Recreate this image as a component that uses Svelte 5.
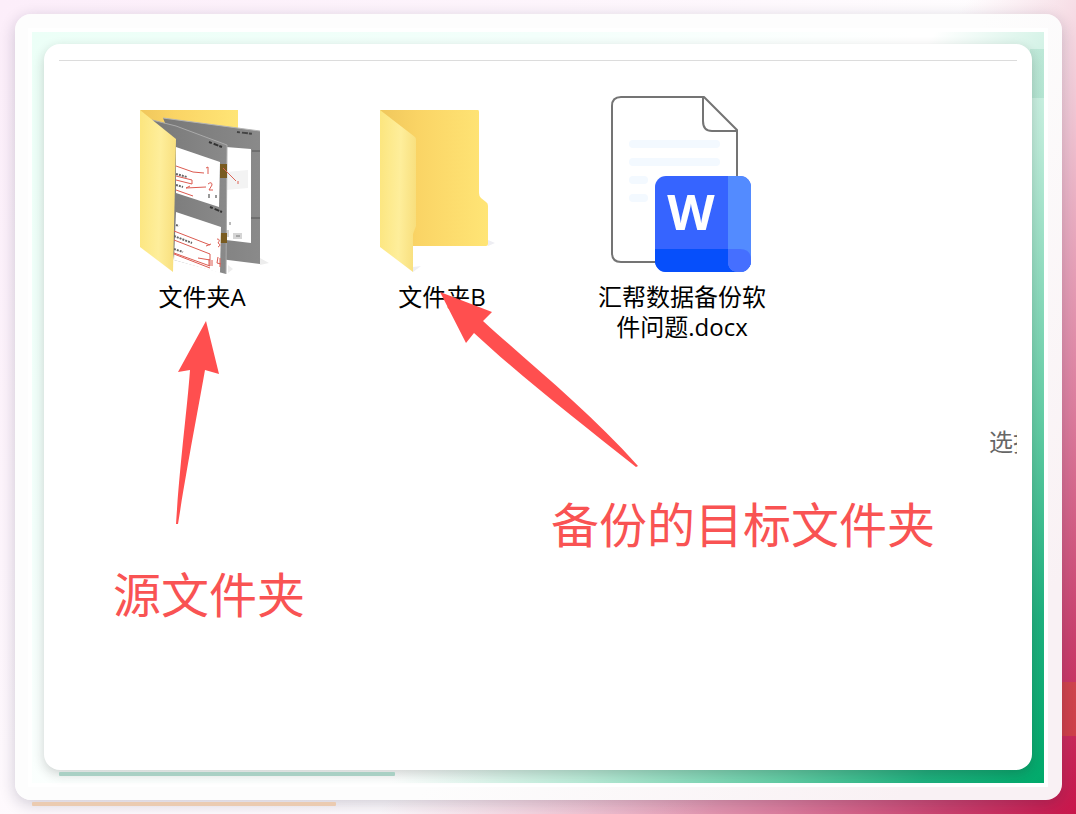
<script lang="ts">
	type FileItem = { name: string; kind: 'pages' | 'empty' | 'docx' };
	type Note = { text: string; x: number; y: number };

	const files: FileItem[] = [
		{ name: '文件夹A', kind: 'pages' },
		{ name: '文件夹B', kind: 'empty' },
		{ name: '汇帮数据备份软件问题.docx', kind: 'docx' }
	];

	// notes and arrows sit freely on the explorer canvas
	const notes: Note[] = [
		{ text: '源文件夹', x: 54, y: 504 },
		{ text: '备份的目标文件夹', x: 492, y: 434 }
	];
	const arrows = [
		'M147 260 L160 313 L146 309 C137 360 129 400 119 463 L117 463 C121 400 128 350 131 309 L119 311 Z',
		'M381 231 L433 251 L424 260 C470 302 530 350 579 405 L577 406 C520 361 460 314 415 272 L407 282 Z'
	];
</script>

{#snippet folder(withPages: boolean)}
	<svg class="icon" width="160" height="180" viewBox="0 0 160 180" aria-hidden="true">
		<defs>
			<linearGradient id="back" x1="0" x2="1">
				<stop offset="0" stop-color="#f0c75c" />
				<stop offset="0.35" stop-color="#fad465" />
				<stop offset="1" stop-color="#ffe576" />
			</linearGradient>
			<linearGradient id="front" x1="0" x2="1" y1="0.4" y2="0.5">
				<stop offset="0" stop-color="#fce680" />
				<stop offset="0.55" stop-color="#feee9b" />
				<stop offset="1" stop-color="#f8df7d" />
			</linearGradient>
			<linearGradient id="sheet" x1="0" x2="1">
				<stop offset="0" stop-color="#787878" />
				<stop offset="1" stop-color="#8a8a8a" />
			</linearGradient>
		</defs>
		{#if withPages}
			<path d="M138 162 l9 5 l-9 2 z M106 169 l5 4 l-5 4 z" fill="#ededed" />
			<path d="M18 14 H116 V90 H50 Z" fill="url(#back)" />
			<path d="M41 22 L138 35 V168 L98 163 Z" fill="url(#sheet)" />
			<path d="M41 22 L138 35" stroke="#b5b5b5" />
			<path d="M104 51 L129 53 V147 L104 144 Z" fill="#fff" />
			<path d="M104 76 L126 74 V92 L104 94 Z" fill="#f3f3f3" />
			<path d="M115 36 l16 2" stroke="#444" stroke-width="2" stroke-dasharray="3 2 6 1" />
			<path d="M130 55 h8 M129 122 h9" stroke="#555" />
			<path d="M111 137 h9 v6 h-9 z M104 134 h3 v7 h-3 z" fill="#d5d5d5" />
			<path d="M114 140 h4 M108 126 v3" stroke="#777" />
			<path d="M30 24 L54 30 L105 49 L104 178 L52 164 Z" fill="url(#sheet)" />
			<path d="M30 24 L54 30 L105 49 L104 178" stroke="#aaa" fill="none" />
			<path d="M98 68 h7 v14 h-7 z M98 137 h7 v10 h-7 z" fill="#795b20" />
			<path d="M101 72 l13 13 m2 3 v-3" stroke="#dc6557" fill="none" />
			<path d="M54 51 L98 66 L97 111 L54 97 Z" fill="#fff" />
			<path d="M54 116 L99 131 L98 177 L52 164 Z" fill="#fff" />
			<path d="M87 46 l13 5 M88 111 l12 5" stroke="#333" stroke-width="2" stroke-dasharray="3 2 5 1" />
			<path d="M54 78 l11 3 M54 89 l7 2 M52 140 l18 7 M52 153 l9 3 M54 129 l3 1" stroke="#666" stroke-width="2" stroke-dasharray="2 1" />
			<g stroke="#dc5a50" stroke-width="1" fill="none">
				<path d="M54 70 l17 6 l11 1 M54 80 l16 4 v4 l-16 -4 M54 94 l17 6 M64 92 l20 -1 M64 92 l4 -2" />
				<path d="M52 135 l36 14 M52 144 l36 14 v12 l-36 -13 M52 158 l36 14 M76 162 l12 2 M84 150 l5 -2" />
				<path d="M84 72 l2 -1 v7 M86 88 q4 -3 4 1 l-3 5 h4 M95 143 q4 0 1 4 q4 2 0 4 M87 163 v7 m3 -6 v6 M96 161 l-1 6 l4 1 m-1 -6 v9" />
			</g>
			<path d="M87 98 v4 M94 99 v3" stroke="#999" stroke-width="2" />
			<path d="M18 14 L54 43 L51 176 L18 151 Z" fill="url(#front)" />
		{:else}
			<path d="M126 144 l7 3 l-7 3 z M51 171 l8 -1 l-8 6 z" fill="#eeeef3" />
			<path d="M18 14 H116 Q117 14 117 16 V97 Q117 100 119 102 L124 106 Q126 107 126 110 V148 Q126 150 124 150 H40 Z" fill="url(#back)" />
			<path d="M18 14 L53 41 Q54 42 54 44 V130 L51 138 V176 L18 151 Z" fill="url(#front)" />
		{/if}
	</svg>
{/snippet}

{#snippet docx()}
	<svg class="icon" width="160" height="180" viewBox="0 0 160 180" aria-hidden="true">
		<path
			d="M102 1 H19 Q10 1 10 10 V157 Q10 166 19 166 H135 V34 Z"
			fill="#fff"
			stroke="#747474"
			stroke-width="2"
			stroke-linejoin="round" />
		<path d="M101 1 V25 Q101 35 110 35 H135" fill="none" stroke="#747474" stroke-width="2" />
		<g fill="#f3f9ff">
			<rect x="27" y="44" width="91" height="8" rx="4" />
			<rect x="27" y="62" width="91" height="8" rx="4" />
			<rect x="27" y="80" width="19" height="8" rx="4" />
			<rect x="27" y="98" width="19" height="8" rx="4" />
		</g>
		<clipPath id="badge"><rect x="53" y="80" width="96" height="96" rx="11" /></clipPath>
		<g clip-path="url(#badge)">
			<rect x="53" y="80" width="96" height="96" fill="#3664ff" />
			<rect x="53" y="153" width="96" height="23" fill="#064ffb" />
			<path d="M126 80 H149 V176 H137 Q126 176 126 165 Z" fill="#538bff" />
			<path d="M126 153 H138 Q149 153 149 164 V165 Q149 176 138 176 H137 Q126 176 126 165 Z" fill="#456fff" />
		</g>
		<text class="letter" x="89" y="134" text-anchor="middle">W</text>
	</svg>
{/snippet}

<main class="backdrop">
	<div class="frame">
		<div class="mat">
			<div class="card">
				<section class="explorer">
					<ul class="files">
						{#each files as file}
							<li>
								<button type="button" class="file">
									{#if file.kind === 'docx'}
										{@render docx()}
									{:else}
										{@render folder(file.kind === 'pages')}
									{/if}
									<span class="name">{file.name}</span>
								</button>
							</li>
						{/each}
					</ul>
					<p class="hint">选择</p>

					<svg class="arrows" width="640" height="480" viewBox="0 0 640 480" aria-hidden="true">
						{#each arrows as d}
							<path {d} />
						{/each}
					</svg>
					{#each notes as note}
						<span class="note" style="left: {note.x}px; top: {note.y}px">{note.text}</span>
					{/each}
				</section>
			</div>
		</div>
	</div>
</main>

<style>
	:global(body) {
		margin: 0;
	}
	.backdrop {
		display: flex;
		box-sizing: border-box;
		min-height: 100vh;
		padding: 14px 14px 14px 15px;
		font-family: 'Open Sans', 'Noto Sans CJK SC', sans-serif;
		background:
			linear-gradient(#d0454d, #d0404a) right 0 bottom 78px / 14px 54px no-repeat,
			radial-gradient(circle at 0 0, #fceefa 0, rgba(252, 238, 250, 0.5) 50%, rgba(255, 255, 255, 0) 80%),
			linear-gradient(126deg, #fff 0, #fff 58%, #f0c3d2 70%, #dd7f9f 82%, #cb426f 92%, #c8154a 100%);
	}
	.frame {
		position: relative;
		display: flex;
		flex: 1;
		padding: 14px 14px 13px 13px;
		border-radius: 16px;
		background: linear-gradient(126deg, #fdfdfd 60%, #f9f1f4 90%);
		box-shadow: 0 4px 16px rgba(20, 20, 50, 0.2);
	}
	.mat {
		display: flex;
		flex: 1;
		padding: 12px 12px 13px;
		border: 4px solid #fff;
		background:
			linear-gradient(rgba(120, 200, 170, 0.25), rgba(120, 200, 170, 0.25)) right 0 top 17px / 14px 49px no-repeat,
			radial-gradient(circle at 0 0, #ecfff7 0, rgba(240, 255, 250, 0.8) 40%, rgba(255, 255, 255, 0) 70%),
			linear-gradient(126deg, #fff 0, #fff 58%, #bbebd8 70%, #62cca4 83%, #1fb07e 92%, #00a96a 100%);
		background-clip: padding-box;
	}
	.card {
		position: relative;
		flex: 1;
		padding: 16px 15px 15px;
		border-radius: 16px;
		background: #fff;
		box-shadow: 0 4px 12px rgba(30, 30, 30, 0.2);
	}
	.frame::after,
	.card::after {
		content: '';
		position: absolute;
		height: 4px;
		border-radius: 1px;
	}
	.frame::after {
		left: 17px;
		bottom: -6px;
		width: 29%;
		background: #ebcbb1;
	}
	.card::after {
		left: 15px;
		bottom: -6px;
		width: 34%;
		background: #a9d0c4;
	}
	.explorer {
		position: relative;
		display: flex;
		border-top: 1px solid #dcdcdc;
	}
	.files {
		display: flex;
		flex: 1;
		margin: 0;
		padding: 35px 0 0 23px;
		list-style: none;
	}
	.file {
		display: flex;
		flex-direction: column;
		align-items: center;
		width: 240px;
		padding: 0;
		border: none;
		background: none;
		color: #000;
		font: inherit;
	}
	.icon {
		display: block;
		margin-bottom: 6px;
	}
	.name {
		width: 180px;
		font-size: 24px;
		line-height: 30px;
		text-align: center;
	}
	.letter {
		font: bold 49px 'Open Sans', sans-serif;
		fill: #fff;
	}
	.hint {
		width: 28px;
		margin: 0;
		padding-top: 366px;
		overflow: hidden;
		color: #666;
		font-size: 24px;
		line-height: 30px;
		white-space: nowrap;
	}
	.arrows {
		position: absolute;
		top: 0;
		left: 0;
		fill: #ff4f4f;
		pointer-events: none;
	}
	.note {
		position: absolute;
		color: #f95353;
		font-size: 48px;
		line-height: 60px;
		white-space: nowrap;
	}
</style>
